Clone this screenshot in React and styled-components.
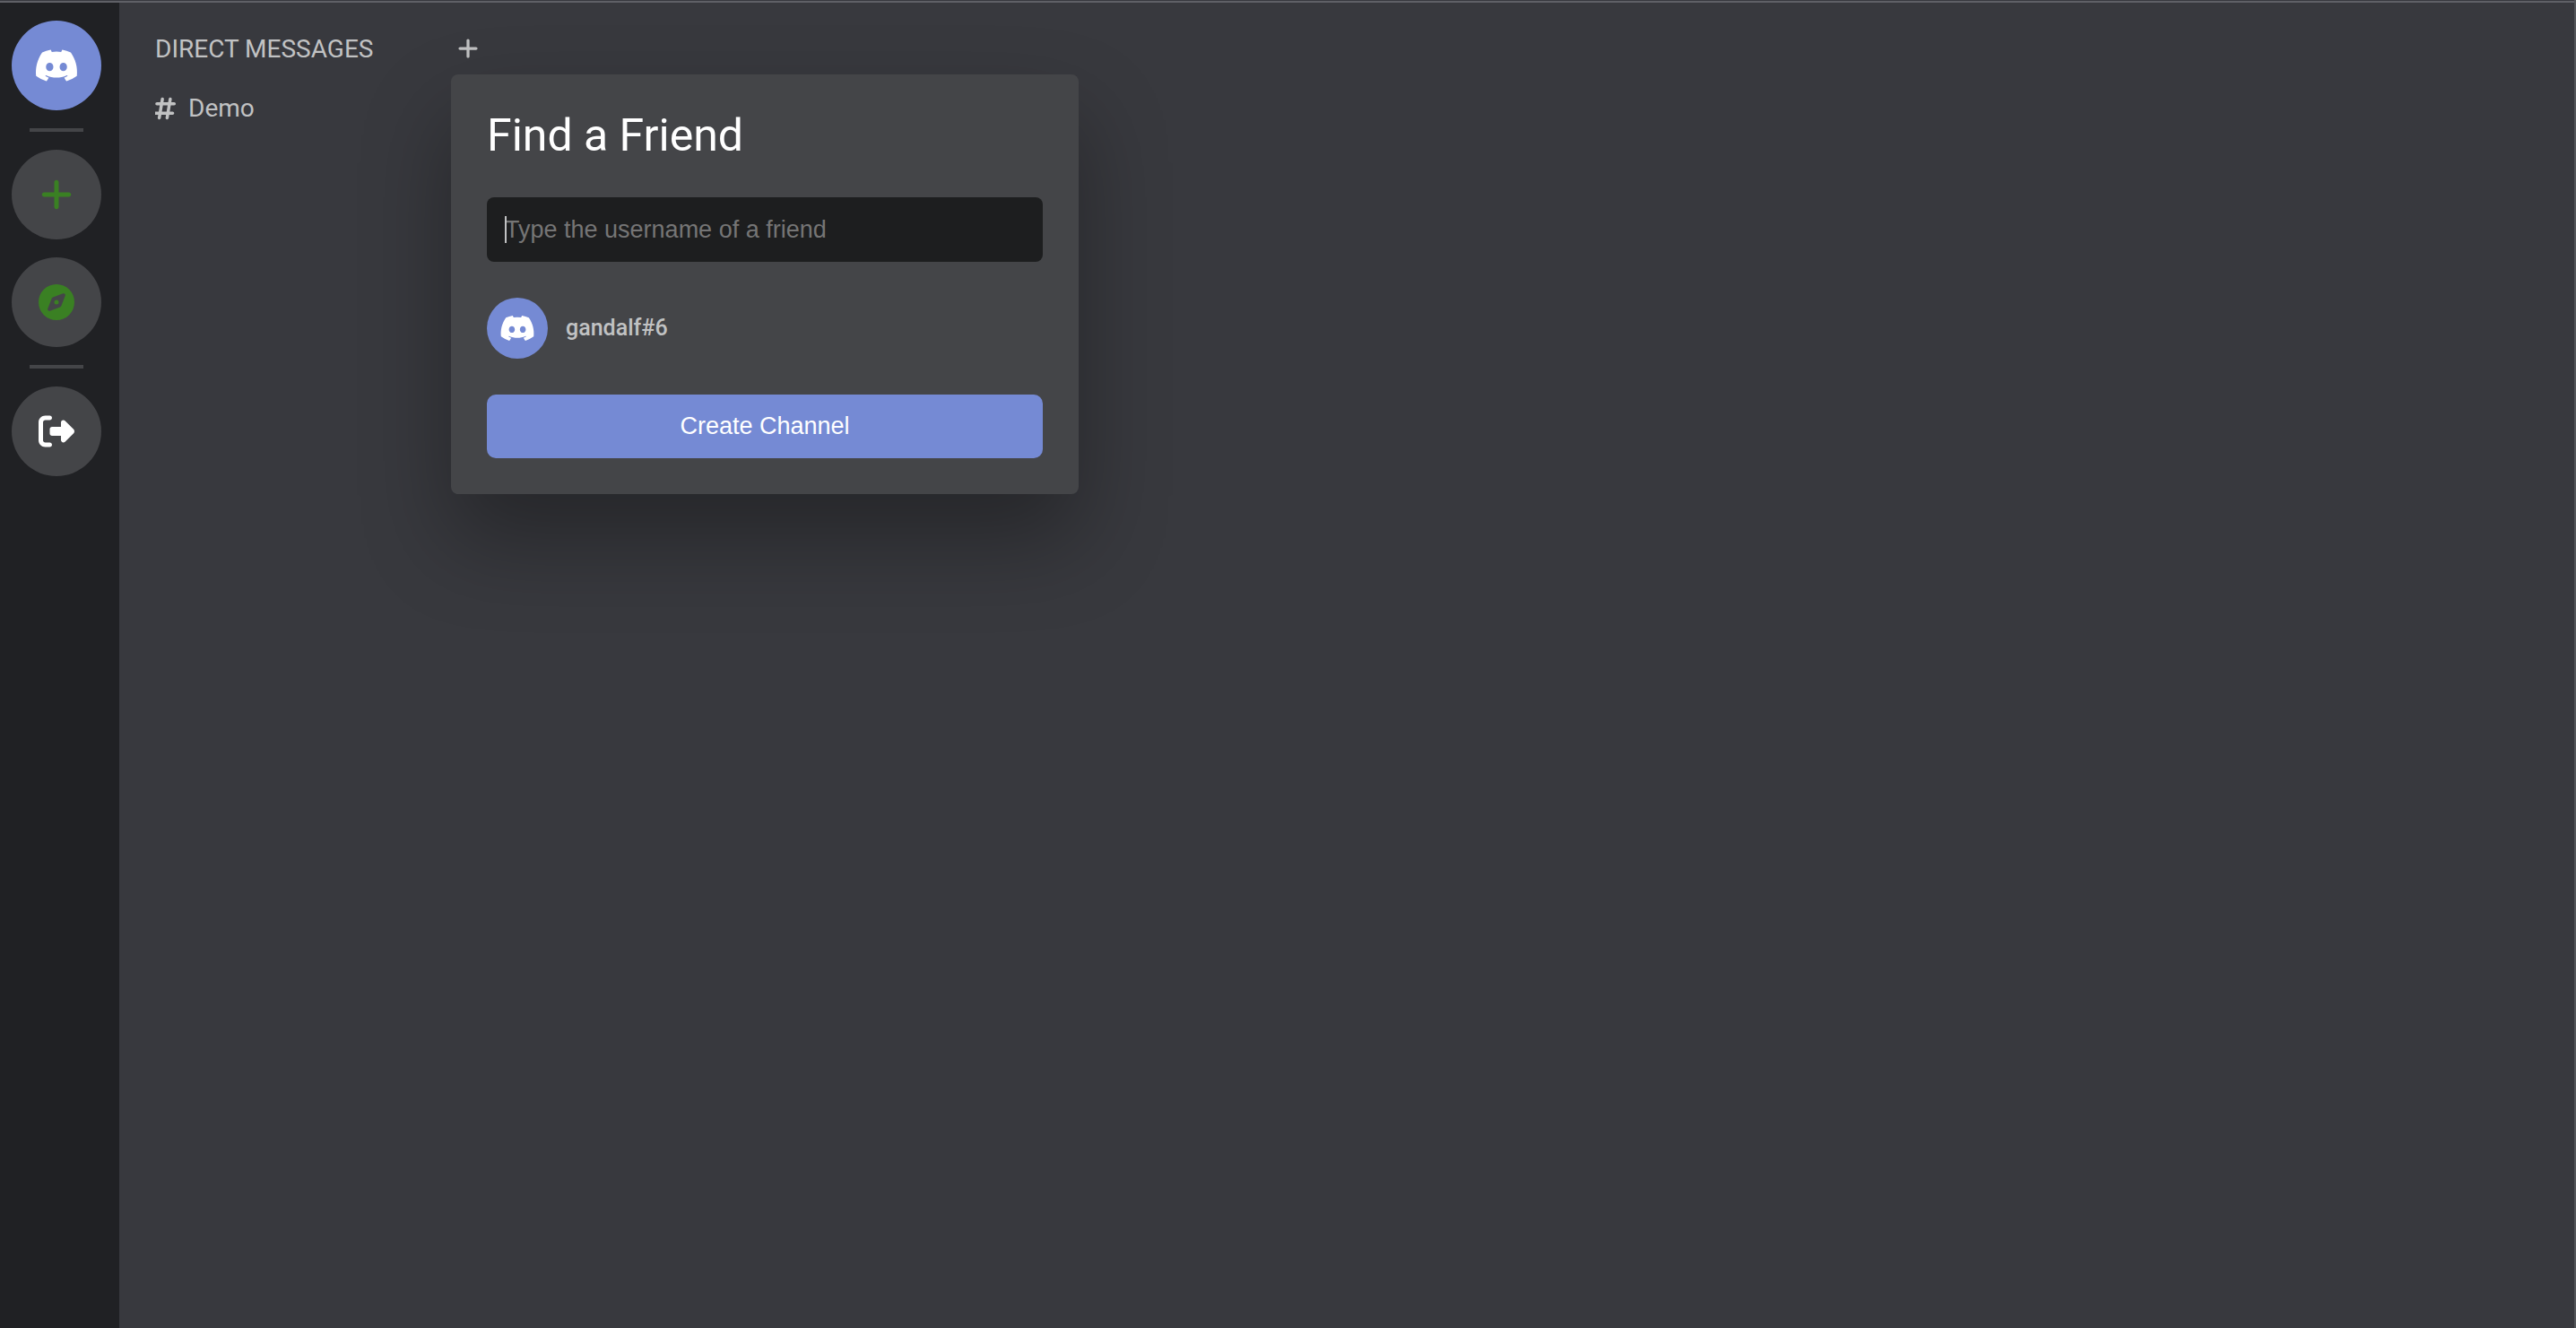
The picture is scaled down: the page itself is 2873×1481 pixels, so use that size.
import React from "react";
import styled, { createGlobalStyle } from "styled-components";
import {
  FaDiscord,
  FaPlus,
  FaCompass,
  FaHashtag,
  FaRightFromBracket,
} from "react-icons/fa6";

const color = {
  rail: "#202124",
  page: "#38393e",
  edge: "#5f6066",
  side: "#54565a",
  panel: "#444548",
  field: "#1d1e1f",
  blurple: "#758ad4",
  green: "#3a8023",
  text: "#c1c2c3",
  muted: "#757575",
};

const GlobalStyle = createGlobalStyle`
  *, *::before, *::after { box-sizing: border-box; }
  body {
    margin: 0;
    background: ${color.page};
    color: ${color.text};
    font-family: Roboto, "Liberation Sans", sans-serif;
    font-size: 28px;
    font-weight: 400;
    line-height: 34px;
  }
  h1, h2, ul, p { margin: 0; padding: 0; }
  button, input { font: inherit; border: 0; margin: 0; }
  button { cursor: pointer; padding: 0; background: none; color: inherit; }
  svg { display: block; flex: none; }
`;

const Shell = styled.div`
  display: flex;
  min-height: 100vh;
  border-right: 2px solid ${color.side};
  padding-top: 1px;
`;

const Frame = styled.div`
  display: flex;
  flex: 1;
  border-top: 2px solid ${color.edge};
`;

const Rail = styled.nav`
  display: flex;
  flex-direction: column;
  align-items: center;
  gap: 20px;
  padding: 20px 20px 20px 13px;
  background: ${color.rail};
`;

const Round = styled.button`
  display: grid;
  place-items: center;
  width: ${(p) => p.$size}px;
  height: ${(p) => p.$size}px;
  flex: none;
  border-radius: 50%;
  background: ${(p) => p.$bg || color.panel};
  color: ${(p) => p.$fg || "#fff"};
`;

const Divider = styled.hr`
  width: 60px;
  height: 4px;
  margin: 0;
  border: 0;
  background: ${color.panel};
`;

const Channels = styled.aside`
  display: flex;
  flex-direction: column;
  gap: 32px;
  width: 400px;
  padding: 35px 0 0 40px;
`;

const ChannelsHead = styled.header`
  display: flex;
  align-items: flex-start;
  justify-content: space-between;
`;

const Heading = styled.h2`
  font-size: 28px;
  font-weight: 400;
  text-transform: uppercase;
`;

const AddWrap = styled.div`
  position: relative;
`;

const AddButton = styled.button`
  display: grid;
  place-items: center;
  width: 24px;
  height: 32px;
`;

const ChannelList = styled.ul`
  list-style: none;
`;

const ChannelLink = styled.a`
  display: flex;
  align-items: center;
  gap: 12px;
  color: inherit;
  text-decoration: none;
`;

const HashIcon = styled(FaHashtag)`
  width: 25px;
  height: 28px;
`;

const Popover = styled.form`
  position: absolute;
  top: 45px;
  left: -6px;
  display: flex;
  flex-direction: column;
  gap: 40px;
  width: 700px;
  padding: 40px;
  border-radius: 8px;
  background: ${color.panel};
  box-shadow: 0 50px 100px rgba(0, 0, 0, 0.33);
`;

const Title = styled.h1`
  color: #fff;
  font-size: 50px;
  font-weight: 400;
  line-height: 57px;
`;

const Field = styled.label`
  position: relative;
  display: block;

  &::before {
    content: "";
    position: absolute;
    left: 20px;
    top: 21px;
    width: 2px;
    height: 30px;
    background: ${color.text};
  }
`;

const Input = styled.input`
  display: block;
  width: 100%;
  height: 72px;
  padding: 0 20px;
  border-radius: 8px;
  outline: none;
  background: ${color.field};
  color: ${color.text};
  caret-color: transparent;
  font-family: "Liberation Sans", Arial, sans-serif;
  font-size: 27px;

  &::placeholder {
    color: ${color.muted};
    opacity: 1;
  }
`;

const Friend = styled.div`
  display: flex;
  align-items: center;
  gap: 20px;
  font-size: 25px;
  font-weight: 500;
`;

const Submit = styled.button`
  height: 71px;
  padding-bottom: 2px;
  border-radius: 10px;
  background: ${color.blurple};
  color: #fff;
  font-family: "Liberation Sans", Arial, sans-serif;
  font-size: 27px;
`;

export default function App() {
  return (
    <>
      <GlobalStyle />
      <Shell>
        <Frame>
          <Rail aria-label="Servers">
            <Round type="button" $size={100} $bg={color.blurple} aria-label="Home">
              <FaDiscord size={50} />
            </Round>
            <Divider />
            <Round type="button" $size={100} $fg={color.green} aria-label="Add a server">
              <FaPlus size={40} />
            </Round>
            <Round type="button" $size={100} $fg={color.green} aria-label="Explore">
              <FaCompass size={40} />
            </Round>
            <Divider />
            <Round type="button" $size={100} aria-label="Log out">
              <FaRightFromBracket size={40} />
            </Round>
          </Rail>
          <Channels>
            <ChannelsHead>
              <Heading>Direct Messages</Heading>
              <AddWrap>
                <AddButton type="button" aria-label="New direct message">
                  <FaPlus size={26} />
                </AddButton>
                <Popover onSubmit={(e) => e.preventDefault()}>
                  <Title>Find a Friend</Title>
                  <Field>
                    <Input
                      type="text"
                      aria-label="Username of a friend"
                      placeholder="Type the username of a friend"
                    />
                  </Field>
                  <Friend>
                    <Round as="span" $size={68} $bg={color.blurple}>
                      <FaDiscord size={40} />
                    </Round>
                    <span>gandalf#6</span>
                  </Friend>
                  <Submit type="submit">Create Channel</Submit>
                </Popover>
              </AddWrap>
            </ChannelsHead>
            <ChannelList>
              <li>
                <ChannelLink href="#demo">
                  <HashIcon viewBox="32 0 448 512" />
                  Demo
                </ChannelLink>
              </li>
            </ChannelList>
          </Channels>
        </Frame>
      </Shell>
    </>
  );
}
